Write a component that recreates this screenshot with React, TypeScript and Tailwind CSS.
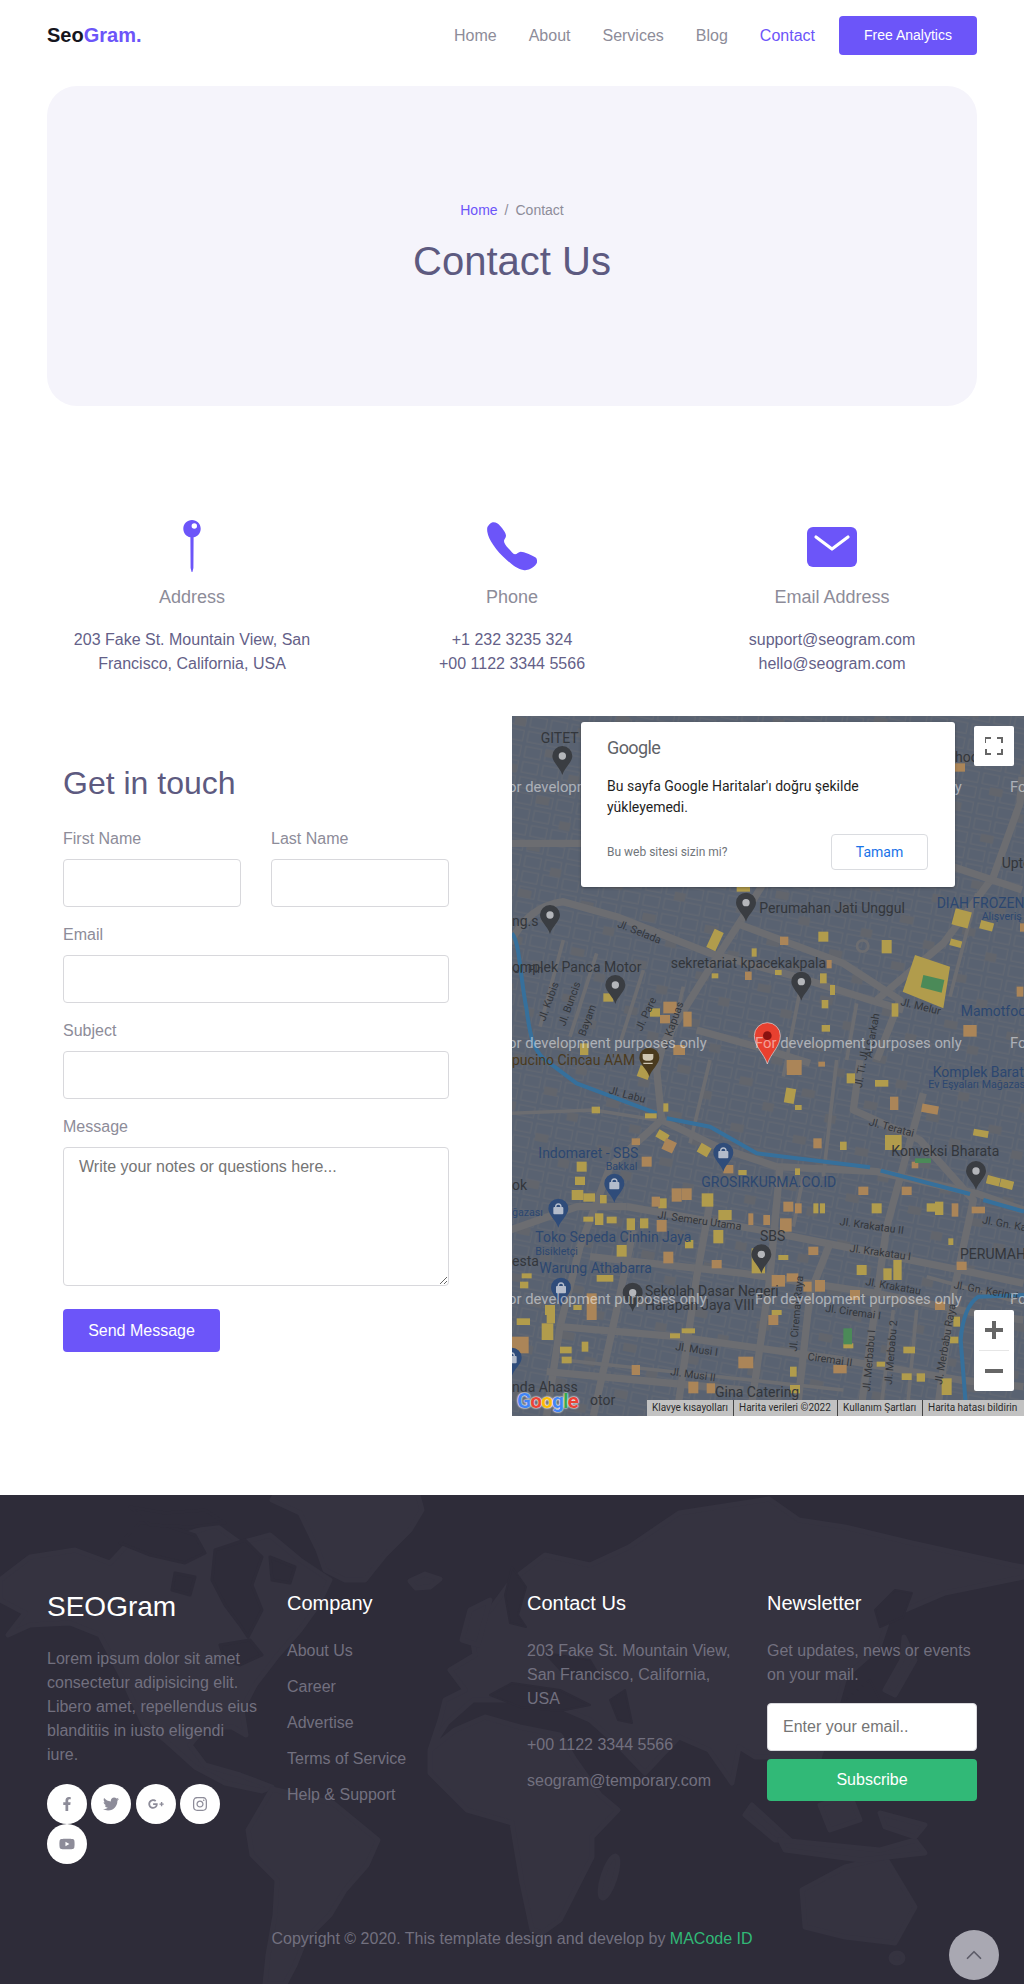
import { ChevronUp } from 'lucide-react';
import { FaFacebookF, FaTwitter, FaGooglePlusG, FaInstagram, FaYoutube } from 'react-icons/fa';

const navLinks = ['Home', 'About', 'Services', 'Blog'];
const companyLinks = ['About Us', 'Career', 'Advertise', 'Terms of Service', 'Help & Support'];
const socials = [FaFacebookF, FaTwitter, FaGooglePlusG, FaInstagram, FaYoutube];

// map data is in "zoom units": 3 units = 1px, origin at (510, 710) of the page
const roads = [
  'M0 700 C40 620 90 585 160 575 L320 620 L600 730 L860 800 L1080 870 L1180 900',
  'M760 520 L700 620 L590 790 L460 1000 L440 1080 L455 1230 L300 1370 L210 1610 L150 1850 L110 2118',
  'M455 1230 L620 1310 L800 1370 L1100 1385 L1400 1450 L1540 1500',
  'M350 1490 L750 1560 L1000 1610 L1400 1690 L1540 1720',
  'M0 1560 L200 1490 L350 1490',
  'M240 1640 L700 1690 L1100 1750 L1400 1810 L1540 1830',
  'M150 1850 L500 1880 L1000 1950 L1350 2010 L1540 2030',
  'M110 1985 L700 2040',
  'M810 1370 L780 1700 L720 2118',
  'M1050 1050 L1030 1200 L1230 1290 L1390 1470 L1330 1750 L1280 2118',
  'M1240 1150 L1130 1550 L1050 2118',
  'M1100 870 L1300 700 L1450 500 L1530 280 L1536 200',
  'M680 640 L1000 760 L1170 870 L1100 1050',
  'M0 400 L520 400',
  'M1240 440 L1536 540',
  'M560 960 L740 1010 L900 1060',
  'M960 1600 L900 1750 L860 2118',
  'M600 1480 L560 1700 L500 2118',
  'M370 1560 L320 1800 L250 2118',
];
const thinRoads = [
  'M160 690 L90 950', 'M260 730 L180 980', 'M400 780 L330 1000', 'M520 830 L480 1000',
  'M880 790 L820 1100', 'M1400 550 L1320 860', 'M1040 880 L1010 1050', 'M600 1050 L540 1300',
  'M980 1050 L940 1400', 'M880 1400 L850 1550', 'M1150 1800 L1110 2118', 'M1220 1800 L1190 2118',
  'M0 1210 L250 1200 L440 1230', 'M1250 1700 L1536 1780', 'M160 1950 L1000 2040',
];
const yellow = [
  [600, 660, 30, 60, 25], [925, 665, 30, 30], [1115, 690, 30, 40], [1320, 690, 35, 20, 15], [1410, 635, 40, 25, 15],
  [1330, 600, 50, 50, 15], [725, 715, 15, 25], [930, 790, 20, 30], [960, 825, 15, 30], [935, 870, 20, 25],
  [795, 780, 20, 15], [605, 790, 20, 15], [420, 895, 30, 25], [210, 1000, 25, 35], [1145, 880, 20, 40],
  [935, 945, 25, 20], [280, 850, 30, 25], [680, 530, 40, 15], [385, 1070, 35, 35, 20],
  [825, 1135, 30, 45, 10], [1010, 1090, 25, 30], [1095, 1110, 40, 20], [855, 1185, 20, 15], [245, 1190, 25, 20],
  [460, 1180, 15, 25], [405, 1210, 35, 15], [440, 1265, 35, 25, 30], [565, 1305, 35, 30, 30], [1125, 1275, 50, 45],
  [990, 1295, 20, 25], [855, 1375, 15, 20], [685, 1380, 25, 15], [1390, 1260, 45, 20, 10], [200, 1355, 30, 30],
  [195, 1400, 30, 25], [185, 1440, 35, 30], [220, 1450, 35, 25], [270, 1455, 20, 25], [220, 1520, 30, 15],
  [255, 1510, 25, 35], [290, 1520, 30, 20], [350, 1525, 25, 35], [390, 1525, 25, 30], [445, 1465, 25, 30],
  [575, 1450, 35, 40], [625, 1500, 40, 30], [610, 1560, 30, 40], [320, 1605, 30, 35], [525, 1590, 25, 25],
  [910, 1480, 15, 30], [930, 1480, 15, 30], [1085, 1480, 30, 30], [1250, 1480, 25, 25], [1275, 1475, 25, 40],
  [1315, 1585, 15, 20], [725, 1615, 40, 75], [805, 1635, 30, 15], [1040, 1665, 30, 30], [1120, 1675, 25, 35],
  [1150, 1650, 25, 60], [260, 1695, 50, 20], [35, 1690, 30, 15], [30, 1715, 25, 20], [110, 1800, 25, 40],
  [95, 1840, 35, 50], [20, 1825, 40, 20], [105, 1785, 30, 30], [190, 1785, 25, 15], [215, 1895, 20, 30],
  [150, 1910, 35, 20], [155, 1940, 30, 20], [480, 1870, 30, 15], [515, 1855, 40, 15], [785, 1800, 30, 15],
  [1330, 1820, 20, 30], [1320, 1880, 25, 20], [1180, 1910, 35, 20], [1175, 1990, 30, 20], [1220, 1990, 25, 25],
  [1100, 1955, 25, 15], [840, 1970, 20, 30], [1295, 2005, 30, 50], [840, 2025, 30, 25], [1430, 1400, 40, 25, 15],
  [1470, 1410, 40, 25, 15], [1000, 1900, 30, 15],
];
const orange = [
  [810, 680, 25, 25], [705, 785, 20, 25], [460, 875, 40, 35], [450, 915, 30, 25], [520, 905, 25, 45],
  [1360, 945, 40, 35], [950, 750, 15, 25], [1520, 830, 20, 30], [1335, 160, 30, 25], [1530, 640, 15, 25],
  [830, 1050, 45, 45], [925, 1055, 20, 15], [1140, 1160, 25, 40], [1235, 1185, 50, 25, 10], [910, 1285, 25, 30],
  [460, 1290, 35, 35, 25], [365, 1285, 25, 20], [395, 1340, 30, 30], [640, 1365, 30, 25], [1205, 1355, 20, 20],
  [485, 1435, 30, 40], [515, 1435, 30, 35], [425, 1460, 25, 30], [1045, 1430, 30, 25], [1175, 1430, 30, 25],
  [820, 1475, 30, 30], [855, 1480, 20, 30], [715, 1510, 15, 35], [760, 1515, 20, 30], [810, 1525, 35, 40],
  [1325, 1480, 20, 40], [1385, 1490, 40, 20], [440, 1530, 30, 35], [460, 1625, 30, 35], [605, 1650, 30, 25],
  [895, 1610, 30, 25], [1340, 1655, 30, 25], [785, 1695, 40, 35], [830, 1690, 35, 25], [880, 1715, 25, 30],
  [915, 1710, 30, 35], [1020, 1740, 30, 30], [230, 1750, 30, 80], [1275, 1775, 30, 25], [775, 1815, 30, 30],
  [685, 1940, 45, 35], [365, 1965, 25, 30], [970, 1965, 40, 25], [535, 2015, 30, 35], [590, 2020, 25, 30],
  [6, 1880, 50, 50], [490, 1005, 35, 30],
];
const grayPins = [[157, 195], [120, 672], [708, 635], [316, 882], [874, 872], [1398, 1440], [754, 1690], [368, 1805]];
const bluePins = [[640, 1385], [313, 1478], [145, 1553], [153, 1790], [5, 2000]];
const labels: [number, number, string][] = [
  [92, 98, 'GITET'], [6, 648, 'ng.s'], [748, 608, 'Perumahan Jati Unggul'], [6, 785, 'omplek Panca Motor'],
  [482, 773, 'sekretariat kpacekakpala'], [1475, 473, 'Uptown'],
  [1144, 1339, 'Konveksi Bharata'], [750, 1592, 'SBS'], [6, 1441, 'ok'], [1350, 1648, 'PERUMAHAN'], [6, 1669, 'esta'],
  [405, 1758, 'Sekolah Dasar Negeri'], [405, 1800, 'Harapan Jaya VIII'], [615, 2060, 'Gina Catering'], [6, 2045, 'nda Ahass'],
  [1335, 155, 'hool'], [240, 2086, 'otor'],
];
const blueLabels: [number, number, string, number][] = [
  [1280, 593, 'DIAH FROZEN', 42], [1415, 629, 'Alışveriş', 32], [1352, 917, 'Mamotfoods', 42],
  [1268, 1100, 'Komplek Barat', 42], [1255, 1133, 'Ev Eşyaları Mağazası', 32], [85, 1345, 'Indomaret - SBS', 42],
  [287, 1379, 'Bakkal', 32], [574, 1430, 'GROSIRKURMA.CO.ID', 42], [6, 1517, 'ğazası', 32],
  [76, 1597, 'Toko Sepeda Cinhin Jaya', 42], [76, 1634, 'Bisikletçi', 32], [88, 1690, 'Warung Athabarra', 42],
];
const streets: [number, number, number, string][] = [
  [320, 650, 22, 'Jl. Selada'], [1170, 885, 14, 'Jl. Melur'], [105, 935, -70, 'Jl. Kubis'], [165, 950, -70, 'Jl. Buncis'],
  [225, 980, -70, 'Bayam'], [395, 965, -65, 'Jl. Pare'], [470, 1020, -70, 'Jl. Kapuas'], [1085, 1045, -80, 'Al Sarkah'],
  [295, 1150, 15, 'Jl. Labu'], [1075, 1245, 15, 'Jl. Teratai'], [442, 1525, 8, 'Jl. Semeru Utama'],
  [988, 1545, 8, 'Jl. Krakatau II'], [1018, 1625, 8, 'Jl. Krakatau I'], [1065, 1725, 10, 'Jl. Krakatau'],
  [1415, 1540, 10, 'Jl. Gn. Kawi'], [1330, 1735, 10, 'Jl. Gn. Kerinci'], [945, 1805, 8, 'Jl. Ciremai I'],
  [495, 1920, 8, 'Jl. Musi I'], [480, 1995, 8, 'Jl. Musi II'], [892, 1950, 8, 'Ciremai II'],
  [860, 1925, -85, 'Jl. Ciremai Raya'], [1080, 2045, -85, 'Jl. Merbabu I'], [1145, 2025, -85, 'Jl. Merbabu 2'],
  [1295, 2025, -80, 'Jl. Merbabu Raya'], [1055, 1135, -80, 'Jl. Ti. Jl'], [12, 790, 0, 'Jl. Pln'],
];
const watermarks = [[-30, 245], [735, 245], [1500, 245], [-30, 1013], [735, 1013], [1500, 1013], [-30, 1781], [735, 1781], [1500, 1781]];

function Pin({ x, y, color, dot }: { x: number; y: number; color: string; dot?: string }) {
  return (
    <g transform={`translate(${x} ${y})`}>
      <path d="M0 0 C-6 -22 -30 -38 -30 -57 A30 30 0 1 1 30 -57 C30 -38 6 -22 0 0 Z" fill={color} />
      {dot && <circle cx="0" cy="-57" r="11" fill={dot} />}
    </g>
  );
}

function MapDrawing() {
  return (
    <svg viewBox="6 18 1536 2100" className="block h-full w-full" style={{ fontFamily: 'Roboto, sans-serif' }}>
      <defs>
        <pattern id="blocks" width="62" height="46" patternUnits="userSpaceOnUse" patternTransform="rotate(11)">
          <rect x="6" y="6" width="48" height="32" fill="none" stroke="#646972" strokeWidth="3" />
        </pattern>
        <pattern id="footprints" width="190" height="142" patternUnits="userSpaceOnUse" patternTransform="rotate(11)">
          <rect x="20" y="14" width="34" height="26" fill="#62656c" />
          <rect x="128" y="94" width="40" height="24" fill="#62656c" />
        </pattern>
      </defs>
      <rect x="6" y="18" width="1536" height="2100" fill="#596271" />
      <rect x="6" y="18" width="1536" height="2100" fill="url(#blocks)" />
      <rect x="6" y="18" width="1536" height="2100" fill="url(#footprints)" />
      <g fill="none" stroke="#6c6d71" strokeLinejoin="round">
        {roads.map((d, i) => <path key={i} d={d} strokeWidth="22" />)}
        {thinRoads.map((d, i) => <path key={i} d={d} strokeWidth="11" />)}
        <circle cx="1058" cy="708" r="17" strokeWidth="8" />
      </g>
      <g fill="none" stroke="#36709c" strokeWidth="12" strokeLinejoin="round">
        <path d="M6 670 C30 700 30 800 50 900 C60 980 70 1030 120 1060 L200 1120 L440 1210" />
        <path d="M470 1225 L600 1250 L740 1330 L1080 1372" />
        <path d="M1112 1382 L1380 1452" />
        <path d="M1420 1470 L1542 1505" />
        <path d="M1542 1755 L1405 1760 Q1360 1790 1352 1890 L1370 2118" />
      </g>
      {yellow.map(([x, y, w, h, r = 0], i) => (
        <rect key={i} x={x} y={y} width={w} height={h} fill="#b19c4c" transform={`rotate(${r} ${x + w / 2} ${y + h / 2})`} />
      ))}
      {orange.map(([x, y, w, h, r = 0], i) => (
        <rect key={i} x={x} y={y} width={w} height={h} fill="#ab8558" transform={`rotate(${r} ${x + w / 2} ${y + h / 2})`} />
      ))}
      <path d="M1215 735 L1320 770 L1300 895 L1178 845 Z" fill="#b19c4c" />
      <path d="M1240 795 L1303 810 L1295 848 L1232 832 Z" fill="#4b8a58" />
      <rect x="1000" y="1855" width="26" height="48" fill="#4b8a58" />
      <rect x="1215" y="1345" width="48" height="14" fill="#4b8a58" />
      {labels.map(([x, y, t]) => <text key={t} x={x} y={y} fontSize="42" fill="#33363b">{t}</text>)}
      {blueLabels.map(([x, y, t, s]) => <text key={t} x={x} y={y} fontSize={s} fill="#2c4770">{t}</text>)}
      <text x="6" y="1064" fontSize="42" fill="#4a3a1e">pucino Cincau A'AM</text>
      {streets.map(([x, y, r, t]) => (
        <text key={t} x={x} y={y} fontSize="32" fill="#33363b" transform={`rotate(${r} ${x} ${y})`}>{t}</text>
      ))}
      {grayPins.map(([x, y]) => <Pin key={`${x}`} x={x} y={y} color="#3a3d42" dot="#b4b6ba" />)}
      {bluePins.map(([x, y]) => (
        <g key={`${x}`}>
          <Pin x={x} y={y} color="#2f4c7a" />
          <rect x={x - 15} y={y - 62} width="30" height="22" rx="3" fill="#b4bccb" />
          <path d={`M${x - 8} ${y - 62} a8 9 0 0 1 16 0`} fill="none" stroke="#b4bccb" strokeWidth="4" />
        </g>
      ))}
      <Pin x={418} y={1100} color="#4a3a1e" />
      <path d="M398 1032 h32 v10 a10 10 0 0 1 -10 10 h-12 a10 10 0 0 1 -10 -10 Z M400 1058 h28 v4 h-28 Z" fill="#cfc6b2" />
      <path d="M772 1062 C762 1030 733 1010 733 977 A39 39 0 1 1 811 977 C811 1010 782 1030 772 1062 Z" fill="#e8402f" stroke="#ddd" strokeWidth="2" />
      <circle cx="772" cy="977" r="13" fill="#8a1210" />
      {watermarks.map(([x, y], i) => (
        <text key={i} x={x} y={y} fontSize="44.5" fill="#ffffff" fillOpacity="0.5">For development purposes only</text>
      ))}
    </svg>
  );
}

function LocationMap() {
  return (
    <div className="relative h-[700px] w-[512px] overflow-hidden font-['Roboto',sans-serif]">
      <MapDrawing />
      <div className="absolute left-[69px] top-[6px] h-[165px] w-[374px] rounded-[3px] bg-white pl-[26px] pr-[27px] pt-[13px] shadow-[0_1px_3px_rgba(0,0,0,0.3)]">
        <div className="text-[18px] leading-[26px] tracking-[-0.6px] text-[#5f6368]">Google</div>
        <p className="mt-[15px] text-[14px] leading-[21px] text-[#1f1f1f]">Bu sayfa Google Haritalar'ı doğru şekilde yükleyemedi.</p>
        <div className="mt-[16px] flex items-center justify-between">
          <span className="text-[12px] text-[#70757a]">Bu web sitesi sizin mi?</span>
          <span className="flex h-[36px] w-[97px] items-center justify-center rounded-[4px] border border-[#dadce0] text-[14px] text-[#1a73e8]">Tamam</span>
        </div>
      </div>
      <div className="absolute right-[10px] top-[10px] flex h-[40px] w-[40px] items-center justify-center rounded-[2px] bg-white">
        <svg width="18" height="18" viewBox="0 0 18 18" fill="none" stroke="#666" strokeWidth="2">
          <path d="M0 6V1H6M12 1H17V6M17 12V17H12M6 17H1V12" />
        </svg>
      </div>
      <div className="absolute bottom-[25px] right-[10px] h-[81px] w-[40px] rounded-[2px] bg-white">
        <div className="flex h-[40px] items-center justify-center">
          <svg width="18" height="18" viewBox="0 0 18 18" fill="#666"><path d="M7 0H11V7H18V11H11V18H7V11H0V7H7Z" /></svg>
        </div>
        <div className="mx-[5px] h-px bg-[#e6e6e6]" />
        <div className="flex h-[40px] items-center justify-center">
          <svg width="18" height="4" viewBox="0 0 18 4" fill="#666"><rect width="18" height="4" /></svg>
        </div>
      </div>
      <div className="absolute bottom-[3px] left-[5px] text-[21px] font-bold leading-[24px] tracking-[-1px] [text-shadow:0_0_2px_#fff,0_0_2px_#fff]">
        <span className="text-[#4285f4]">G</span><span className="text-[#ea4335]">o</span><span className="text-[#fbbc05]">o</span><span className="text-[#4285f4]">g</span><span className="text-[#34a853]">l</span><span className="text-[#ea4335]">e</span>
      </div>
      <div className="absolute bottom-0 right-0 flex h-[16px] w-[377px] items-center bg-[#c2c2c2] text-[10px] leading-[16px] text-[#2a2a2a]">
        <span className="w-[87px] whitespace-nowrap border-r border-[#444] pl-[5px]">Klavye kısayolları</span>
        <span className="w-[104px] whitespace-nowrap border-r border-[#444] pl-[5px]">Harita verileri ©2022</span>
        <span className="w-[85px] whitespace-nowrap border-r border-[#444] pl-[5px]">Kullanım Şartları</span>
        <span className="flex-1 whitespace-nowrap pl-[5px]">Harita hatası bildirin</span>
      </div>
    </div>
  );
}

function Field({ label, className }: { label: string; className?: string }) {
  return (
    <div className={className}>
      <label className="block h-[32px] text-[16px] leading-[24px] text-[#8d8c99]">{label}</label>
      <input className="block h-[48px] w-full rounded-[4px] border border-[#d8d8dc] bg-white" />
    </div>
  );
}

function WorldMap() {
  return (
    <svg viewBox="0 0 1024 489" className="absolute inset-0 h-full w-full" fill="#353340" stroke="#353340" strokeWidth="5" strokeLinejoin="round" preserveAspectRatio="none">
      {/* north america */}
      <path d="M0 85 L30 62 L75 55 L110 68 L125 52 L150 42 L172 50 L190 38 L215 30 L240 48 L270 40 L300 65 L330 85 L318 110 L300 135 L278 160 L255 190 L242 215 L246 240 L232 232 L205 232 L190 250 L205 270 L240 280 L272 292 L262 296 L225 288 L195 272 L165 245 L143 228 L122 182 L100 140 L70 128 L30 130 L8 140 L25 118 L0 105 Z" />
      <path d="M272 5 L300 18 L318 55 L325 75 L345 85 L365 85 L385 60 L410 35 L422 15 L418 0 L275 0 Z" />
      <path d="M410 86 L425 79 L440 84 L430 92 L416 93 Z" />
      {/* canadian water */}
      <g fill="#2e2c39" stroke="#2e2c39" strokeWidth="3">
        <path d="M215 55 L245 45 L262 62 L252 90 L262 115 L248 142 L240 130 L225 110 L212 85 Z" />
        <path d="M120 48 L150 60 L185 68 L205 58 L195 40 L165 30 L140 28 Z" />
        <path d="M130 12 L165 18 L205 15 L225 28 L190 32 L150 30 Z" />
        <path d="M175 78 L195 82 L190 100 L172 95 Z" />
        <path d="M270 62 L295 72 L290 88 L272 85 Z" />
        <path d="M220 150 L250 145 L262 160 L240 170 L225 165 Z" />
      </g>
      {/* south america */}
      <path d="M272 294 L333 308 L378 345 L367 370 L345 395 L330 420 L305 445 L295 470 L285 489 L265 489 L268 460 L275 420 L277 385 L252 360 L248 335 Z" />
      {/* africa and eurasia */}
      <path d="M430 255 L447 228 L473 205 L520 205 L560 212 L590 225 L618 250 L645 278 L679 242 L709 255 L732 288 L739 252 L755 262 L789 262 L812 300 L820 260 L832 228 L845 182 L879 152 L889 122 L945 98 L1024 82 L1024 72 L1012 70 L912 48 L845 32 L799 25 L769 4 L679 18 L629 52 L590 70 L545 60 L512 85 L490 115 L470 130 L475 160 L450 175 L465 195 L445 205 L440 225 L430 255 L430 278 L467 315 L512 328 L522 388 L532 435 L542 438 L560 425 L592 362 L592 342 L618 315 L600 300 L575 265 L560 240 L520 232 L485 222 L455 235 Z" />
      <path d="M802 395 L845 372 L885 362 L915 412 L895 448 L845 442 L805 432 Z" />
      <ellipse cx="609" cy="382" rx="6" ry="22" transform="rotate(18 609 382)" />
      <ellipse cx="897" cy="463" rx="6" ry="5" />
      <path d="M752 310 L790 345 L775 345 L745 320 Z" />
      <path d="M780 345 L880 355 L915 345 L925 358 L860 365 L785 355 Z" />
      <path d="M820 310 L850 300 L860 325 L830 335 Z" />
      <path d="M880 318 L925 330 L915 342 L885 332 Z" />
      <path d="M470 115 L490 105 L478 150 L462 145 Z" />
      {/* dark seas over eurasia */}
      <g fill="#2e2c39" stroke="#2e2c39" strokeWidth="2">
        <path d="M512 188 L560 195 L590 210 L560 216 L520 212 L490 200 Z" />
        <path d="M512 72 L526 92 L518 120 L526 132 L510 128 L505 100 Z" />
        <path d="M545 158 L590 165 L600 182 L565 180 Z" />
        <path d="M875 115 L895 95 L912 98 L903 122 L880 132 Z" />
        <path d="M845 205 L870 185 L880 205 L860 225 Z" />
        <path d="M610 205 L625 195 L632 228 L618 225 Z" />
      </g>
      <path d="M904 142 L915 165 L895 200 L885 195 L902 165 Z" />
    </svg>
  );
}

export default function App() {
  return (
    <div className="min-h-screen bg-white font-['Liberation_Sans',Arial,sans-serif]">
      <header className="mx-auto flex h-[86px] w-[930px] items-start justify-between pt-[16px]">
        <a className="mt-[8px] text-[20px] font-bold leading-[23px] text-[#16161e]">
          Seo<span className="text-[#6c55f9]">Gram.</span>
        </a>
        <nav className="flex items-center">
          {navLinks.map((link) => (
            <a key={link} className="mr-[32px] text-[16px] leading-[24px] text-[#8d8c99]">{link}</a>
          ))}
          <a className="mr-[24px] text-[16px] leading-[24px] text-[#6c55f9]">Contact</a>
          <a className="flex h-[39px] w-[138px] items-center justify-center rounded-[4px] bg-[#6c55f9] text-[14px] text-white">Free Analytics</a>
        </nav>
      </header>

      <section className="mx-auto flex h-[320px] w-[930px] flex-col items-center rounded-[30px] bg-[#f5f4fb] pt-[115px]">
        <div className="text-[14px] leading-[18px] text-[#8d8c99]">
          <span className="text-[#6c55f9]">Home</span><span className="px-[7px]">/</span>Contact
        </div>
        <h1 className="mt-[18px] text-[40px] font-normal leading-[48px] text-[#5d5a80]">Contact Us</h1>
      </section>

      <section className="mx-auto mt-[114px] grid w-[960px] grid-cols-3 text-center">
        <div className="px-[15px]">
          <svg className="mx-auto block h-[52px]" width="20" height="52" viewBox="0 0 20 52" fill="#6c55f9">
            <path fillRule="evenodd" d="M10 0 C14.8 0 18.7 3.9 18.7 8.7 C18.7 13 15.6 16.6 11.6 17.3 L11.4 48 L10.4 52 L9.6 52 L8.6 48 L8.4 17.3 C4.4 16.6 1.3 13 1.3 8.7 C1.3 3.9 5.2 0 10 0 Z M12.3 3.3 A2.7 2.7 0 1 0 12.3 8.7 A2.7 2.7 0 1 0 12.3 3.3 Z" />
          </svg>
          <h3 className="mt-[12px] text-[18px] font-normal leading-[27px] text-[#8d8c99]">Address</h3>
          <p className="mt-[17px] text-[16px] leading-[24px] text-[#645f88]">203 Fake St. Mountain View, San Francisco, California, USA</p>
        </div>
        <div className="px-[15px]">
          <svg className="mx-auto block h-[52px]" width="50" height="52" viewBox="0 0 50 52" fill="#6c55f9">
            <path d="M5.7 2.3 C9 2 11 3.5 13 5.7 C16 9 19 13 19 15.7 C19 18 17 19 17 21 C17 23 19 26 21.3 28.3 C24 31 26 34.3 28 34.3 C30 34.3 31.5 31.7 33.7 31.7 C37 31.7 45 35 49 37.7 C50 39 50.5 41.5 49.7 43.3 C48 46 45.5 48 43 49 C41 50 38.5 50.5 36.3 50 C30 49 25 44.5 19.7 40 C14 35 10 30.5 6.3 25 C3 20 1 16 .3 11.7 C0 9 0 7 1.3 5.7 C2.5 4 4 2.7 5.7 2.3 Z" />
          </svg>
          <h3 className="mt-[12px] text-[18px] font-normal leading-[27px] text-[#8d8c99]">Phone</h3>
          <p className="mt-[17px] text-[16px] leading-[24px] text-[#645f88]">+1 232 3235 324<br />+00 1122 3344 5566</p>
        </div>
        <div className="px-[15px]">
          <svg className="mx-auto block h-[52px]" width="50" height="52" viewBox="0 0 50 52" fill="#6c55f9">
            <rect x="0" y="7" width="50" height="40" rx="6" />
            <path d="M9 17 L25 29 L41 17" fill="none" stroke="#fff" strokeWidth="3.2" strokeLinecap="round" strokeLinejoin="round" />
          </svg>
          <h3 className="mt-[12px] text-[18px] font-normal leading-[27px] text-[#8d8c99]">Email Address</h3>
          <p className="mt-[17px] text-[16px] leading-[24px] text-[#645f88]">support@seogram.com<br />hello@seogram.com</p>
        </div>
      </section>

      <section className="mt-[40px] flex">
        <form className="w-[512px] pl-[63px] pr-[63px] pt-[46px]">
          <h2 className="text-[32px] font-normal leading-[42px] text-[#5d5a80]">Get in touch</h2>
          <div className="mt-[23px] flex gap-[30px]">
            <Field label="First Name" className="w-[178px]" />
            <Field label="Last Name" className="w-[178px]" />
          </div>
          <Field label="Email" className="mt-[16px]" />
          <Field label="Subject" className="mt-[16px]" />
          <div className="mt-[16px]">
            <label className="block h-[32px] text-[16px] leading-[24px] text-[#8d8c99]">Message</label>
            <textarea
              rows={5}
              placeholder="Write your notes or questions here..."
              className="block h-[139px] w-full rounded-[4px] border border-[#d8d8dc] bg-white px-[15px] py-[7px] text-[16px] leading-[24px] placeholder:text-[#757575]"
            />
          </div>
          <button type="button" className="mt-[23px] block h-[43px] w-[157px] rounded-[4px] bg-[#6c55f9] text-[16px] text-white">Send Message</button>
        </form>
        <LocationMap />
      </section>

      <footer className="relative mt-[79px] h-[489px] overflow-hidden bg-[#2e2c39]">
        <WorldMap />
        <div className="relative mx-auto grid w-[960px] grid-cols-4 pt-[92px] text-[16px] leading-[24px] text-[#72707f]">
          <div className="px-[15px]">
            <h3 className="text-[28px] font-normal leading-[40px] text-white">SEOGram</h3>
            <p className="mt-[20px]">Lorem ipsum dolor sit amet consectetur adipisicing elit. Libero amet, repellendus eius blanditiis in iusto eligendi iure.</p>
            <div className="mt-[17px] flex flex-wrap gap-x-[4.4px]">
              {socials.map((Icon, i) => (
                <a key={i} className="flex h-[40px] w-[40px] items-center justify-center rounded-full bg-white text-[#8d8c99]">
                  <Icon size={i === 0 ? 14 : 16} />
                </a>
              ))}
            </div>
          </div>
          <div className="px-[15px]">
            <h5 className="text-[20px] font-normal leading-[32px] text-white">Company</h5>
            <ul className="mt-[20px]">
              {companyLinks.map((link) => (
                <li key={link} className="mb-[12px]">{link}</li>
              ))}
            </ul>
          </div>
          <div className="px-[15px]">
            <h5 className="text-[20px] font-normal leading-[32px] text-white">Contact Us</h5>
            <p className="mt-[20px]">203 Fake St. Mountain View, San Francisco, California, USA</p>
            <p className="mt-[22px]">+00 1122 3344 5566</p>
            <p className="mt-[12px]">seogram@temporary.com</p>
          </div>
          <div className="px-[15px]">
            <h5 className="text-[20px] font-normal leading-[32px] text-white">Newsletter</h5>
            <p className="mt-[20px]">Get updates, news or events on your mail.</p>
            <input
              placeholder="Enter your email.."
              className="mt-[16px] block h-[48px] w-full rounded-[4px] border border-[#d8d8dc] bg-white px-[15px] text-[16px] placeholder:text-[#757575]"
            />
            <button type="button" className="mt-[8px] block h-[42px] w-full rounded-[4px] bg-[#31b977] text-[16px] text-white">Subscribe</button>
          </div>
        </div>
        <p className="absolute bottom-[33px] left-0 w-full text-center text-[16px] leading-[24px] text-[#72707f]">
          Copyright © 2020. This template design and develop by <a className="text-[#31b977]">MACode ID</a>
        </p>
        <button type="button" className="absolute bottom-[4px] right-[25px] flex h-[50px] w-[50px] items-center justify-center rounded-full bg-[#a9a8b2] text-[#5d5c68]">
          <ChevronUp size={26} strokeWidth={1.6} />
        </button>
      </footer>
    </div>
  );
}
